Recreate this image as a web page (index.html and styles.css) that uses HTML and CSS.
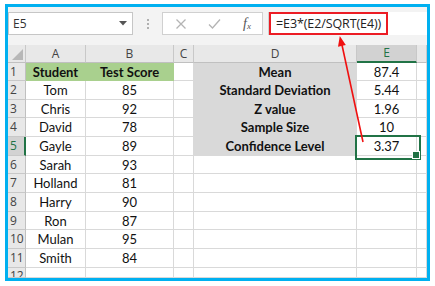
FILE: index.html
```html
<!DOCTYPE html>
<html>
<head>
<meta charset="utf-8">
<link rel="stylesheet" href="styles.css">
</head>
<body>
<div class="frame">
  <div class="toolbar">
    <div class="namebox"><span class="ref">E5</span><svg class="caret" width="8" height="5" viewBox="0 0 8 5"><path d="M0 0H8L4 4.5Z" fill="#555"/></svg></div>
    <div class="dots"><i></i><i></i><i></i></div>
    <div class="fxbox">
      <svg class="ico" width="12" height="12" viewBox="0 0 12 12"><path d="M1.5 1.5L10.5 10.5M10.5 1.5L1.5 10.5" stroke="#b4b4b4" stroke-width="1.3" fill="none"/></svg>
      <svg class="ico" width="13" height="12" viewBox="0 0 13 12"><path d="M1 6.5L4.5 10L12 1.5" stroke="#b4b4b4" stroke-width="1.3" fill="none"/></svg>
      <span class="fx">f<sub>x</sub></span>
    </div>
    <div class="formula"><div class="hl">=E3*(E2/SQRT(E4))</div></div>
  </div>
  <div class="sheet">
    <div class="hd corner"><i class="tri"></i></div><div class="hd">A</div><div class="hd">B</div><div class="hd">C</div><div class="hd">D</div><div class="hd sel-col">E</div><div class="hd"></div>

    <div class="rh">1</div><div class="c g b">Student</div><div class="c g b">Test Score</div><div class="c"></div><div class="c gr b">Mean</div><div class="c">87.4</div><div class="c"></div>
    <div class="rh">2</div><div class="c">Tom</div><div class="c">85</div><div class="c"></div><div class="c gr b">Standard Deviation</div><div class="c">5.44</div><div class="c"></div>
    <div class="rh">3</div><div class="c">Chris</div><div class="c">92</div><div class="c"></div><div class="c gr b">Z value</div><div class="c">1.96</div><div class="c"></div>
    <div class="rh">4</div><div class="c">David</div><div class="c">78</div><div class="c"></div><div class="c gr b">Sample Size</div><div class="c">10</div><div class="c"></div>
    <div class="rh sel-row">5</div><div class="c">Gayle</div><div class="c">89</div><div class="c"></div><div class="c gr b last">Confidence Level</div><div class="c active">3.37</div><div class="c"></div>
    <div class="rh">6</div><div class="c">Sarah</div><div class="c">93</div><div class="c"></div><div class="c"></div><div class="c"></div><div class="c"></div>
    <div class="rh">7</div><div class="c">Holland</div><div class="c">81</div><div class="c"></div><div class="c"></div><div class="c"></div><div class="c"></div>
    <div class="rh">8</div><div class="c">Harry</div><div class="c">90</div><div class="c"></div><div class="c"></div><div class="c"></div><div class="c"></div>
    <div class="rh">9</div><div class="c">Ron</div><div class="c">87</div><div class="c"></div><div class="c"></div><div class="c"></div><div class="c"></div>
    <div class="rh">10</div><div class="c">Mulan</div><div class="c">95</div><div class="c"></div><div class="c"></div><div class="c"></div><div class="c"></div>
    <div class="rh">11</div><div class="c">Smith</div><div class="c">84</div><div class="c"></div><div class="c"></div><div class="c"></div><div class="c"></div>
    <div class="rh cut">12</div><div class="c"></div><div class="c"></div><div class="c"></div><div class="c"></div><div class="c"></div><div class="c"></div>
  </div>
</div>
<svg class="arrow" width="435" height="286" viewBox="0 0 435 286">
  <line x1="363" y1="142" x2="342" y2="45" stroke="#f01010" stroke-width="1.6"/>
  <polygon points="339.8,36 345.8,45 338,46.7" fill="#f01010"/>
</svg>
</body>
</html>
```

FILE: styles.css
```css
* { box-sizing: border-box; }
html, body { margin: 0; padding: 0; background: #fff; }
body { position: relative; width: 435px; height: 286px; overflow: hidden; font-family: Lato, "Liberation Sans", sans-serif; }

.frame {
  margin: 4px 0 0 5px;
  width: 425px;
  height: 277px;
  border: 3px solid #00b0f0;
  display: flex;
  flex-direction: column;
  overflow: hidden;
  background: #f3f3f3;
}

.toolbar {
  height: 38px;
  flex: none;
  display: flex;
  align-items: flex-start;
  padding-top: 5px;
  background: #f3f3f3;
}
.namebox {
  width: 125px;
  height: 23px;
  background: #fff;
  border: 1px solid #c6c6c6;
  display: flex;
  align-items: center;
  justify-content: space-between;
  padding: 0 5px 0 4px;
  font-family: "Open Sans", "Noto Sans", sans-serif;
  font-size: 12px;
  color: #333;
}
.dots {
  width: 29px;
  height: 23px;
  display: flex;
  flex-direction: column;
  align-items: center;
  justify-content: center;
  gap: 2px;
}
.dots i { width: 2px; height: 2px; background: #b0b0b0; display: block; }
.fxbox {
  width: 101px;
  height: 23px;
  background: #fff;
  border: 1px solid #d0d0d0;
  margin-right: 5px;
  display: flex;
  align-items: center;
  padding-left: 12px;
  gap: 21px;
}
.fx {
  font-family: "Liberation Serif", serif;
  font-style: italic;
  font-size: 14px;
  color: #555;
  margin-left: 1px;
}
.fx sub { font-size: 9px; vertical-align: -1px; }
.formula {
  flex: 1;
  height: 23px;
  background: #fff;
  border-left: 1px solid #d0d0d0;
}
.hl {
  width: 119px;
  height: 23px;
  border: 2px solid #ec1c24;
  font-family: "Open Sans", "Noto Sans", sans-serif;
  font-size: 12.5px;
  line-height: 19px;
  color: #222;
  padding-left: 5px;
  white-space: nowrap;
  letter-spacing: -0.1px;
}

.sheet {
  flex: 1;
  display: grid;
  grid-template-columns: 18px 60px 88px 20px 163px 60px 10px;
  grid-template-rows: 18px 18px 19px 18px 19px 19px 18px 19px 19px 18px 19px 19px 10px;
  background: #fff;
}
.hd {
  background: #e8e8e8;
  border-right: 1px solid #c8c8c8;
  border-bottom: 1px solid #c0c0c0;
  font-family: "Open Sans", "Noto Sans", sans-serif;
  font-size: 12px;
  color: #444;
  display: flex;
  align-items: center;
  justify-content: center;
  line-height: 1;
}
.corner { position: relative; }
.tri {
  position: absolute;
  right: 2px;
  bottom: 2px;
  width: 0;
  height: 0;
  border-left: 11px solid transparent;
  border-bottom: 11px solid #b7b7b7;
}
.sel-col {
  background: #d2d2d2;
  color: #217346;
  border-bottom: 2px solid #217346;
}
.rh {
  background: #e8e8e8;
  border-right: 1px solid #c0c0c0;
  border-bottom: 1px solid #c8c8c8;
  font-family: "Open Sans", "Noto Sans", sans-serif;
  font-size: 12px;
  color: #444;
  padding-left: 2px;
  display: flex;
  align-items: center;
  line-height: 1;
}
.sel-row {
  background: #d2d2d2;
  color: #217346;
  border-right: 2px solid #217346;
}
.cut { align-items: flex-start; padding-top: 2px; overflow: hidden; }

.c {
  border-right: 1px solid #d9d9d9;
  border-bottom: 1px solid #d9d9d9;
  font-size: 13px;
  color: #111;
  display: flex;
  align-items: center;
  justify-content: center;
  white-space: nowrap;
  padding-top: 1px;
  line-height: 1;
}
.b { font-weight: bold; }
.g { background: #a9d08e; border-color: #a9d08e; }
.gr { background: #d9d9d9; border-color: #d9d9d9; }
.gr.last { border-bottom-color: #d9d9d9; }

.active { position: relative; }
.active::after {
  content: "";
  position: absolute;
  left: -2px;
  top: -2px;
  width: 62px;
  height: 21px;
  border: 2px solid #217346;
}
.active::before {
  content: "";
  position: absolute;
  right: -4px;
  bottom: -4px;
  width: 6px;
  height: 6px;
  background: #217346;
  border: 1px solid #fff;
  z-index: 2;
}

.arrow { position: absolute; left: 0; top: 0; pointer-events: none; }
```
